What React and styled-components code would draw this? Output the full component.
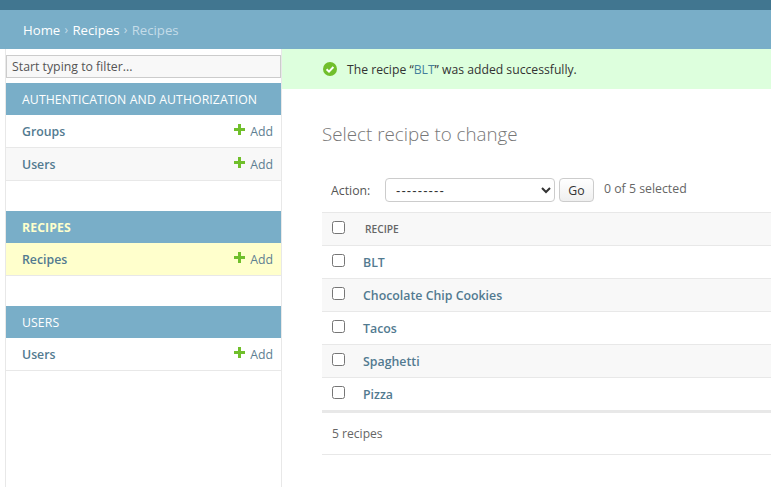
import React from 'react';
import styled, { createGlobalStyle } from 'styled-components';

const GlobalStyle = createGlobalStyle`
  html, body {
    margin: 0;
    padding: 0;
    height: 100%;
    overflow: hidden;
    background: #fff;
    font-family: "Open Sans", "Noto Sans", sans-serif;
    color: #333;
  }
  #root { height: 100%; }
`;

const Page = styled.div`
  width: 771px;
  height: 487px;
  display: flex;
  flex-direction: column;
  overflow: hidden;
`;

const TopBar = styled.div`
  height: 10px;
  background: #417690;
`;

const Breadcrumbs = styled.div`
  height: 39px;
  box-sizing: border-box;
  padding: 0 23px;
  display: flex;
  align-items: center;
  gap: 4.3px;
  background: #79aec8;
  color: #c4dce8;
  font-size: 13.2px;
`;

const Crumb = styled.span`
  color: ${(p) => (p.$current ? '#c4dce8' : '#fff')};
`;

const Sep = styled.span`
  font-size: 12px;
`;

const Body = styled.div`
  flex: 1;
  display: flex;
  min-height: 0;
`;

const Sidebar = styled.div`
  width: 277px;
  margin-left: 5px;
  box-sizing: border-box;
  border-left: 1px solid #e8e8e8;
  border-right: 1px solid #e8e8e8;
  padding-top: 6px;
  flex-shrink: 0;
`;

const Filter = styled.input`
  display: block;
  width: 275px;
  height: 23px;
  box-sizing: border-box;
  margin: 0 0 5px;
  padding: 0 5px;
  border: 1px solid #ccc;
  border-radius: 0;
  background: #f8f8f8;
  outline: none;
  font-family: inherit;
  font-size: 12.3px;
  &::placeholder { color: #555; opacity: 1; }
`;

const Section = styled.div`
  margin-bottom: 30px;
`;

const Caption = styled.div`
  height: 32px;
  box-sizing: border-box;
  padding-left: 16px;
  display: flex;
  align-items: center;
  background: #79aec8;
  color: ${(p) => (p.$active ? '#ffffcc' : '#fff')};
  font-size: 12.25px;
  font-weight: ${(p) => (p.$active ? 700 : 400)};
  letter-spacing: 0.1px;
`;

const SideRow = styled.div`
  height: 33px;
  box-sizing: border-box;
  padding: 0 8px 0 16px;
  display: flex;
  align-items: center;
  justify-content: space-between;
  border-bottom: 1px solid #e8e8e8;
  background: ${(p) => p.$bg || '#fff'};
  font-size: 12.3px;
`;

const ModelLink = styled.span`
  font-weight: 600;
  color: #527a90;
`;

const AddLink = styled.span`
  display: flex;
  align-items: center;
  gap: 5px;
  color: #5f7f92;
`;

const PlusIcon = styled.svg`
  width: 11px;
  height: 11px;
  margin-top: -4px;
  fill: #70bf2b;
`;

const Main = styled.div`
  flex: 1;
  min-width: 0;
`;

const Message = styled.div`
  height: 40px;
  box-sizing: border-box;
  padding-left: 41px;
  display: flex;
  align-items: center;
  gap: 10px;
  background: #dfd;
  font-size: 12.2px;
`;

const MessageLink = styled.span`
  color: #447e9b;
`;

const Content = styled.div`
  padding: 31px 0 0 40px;
`;

const Title = styled.h1`
  margin: 0 0 30px;
  height: 28px;
  line-height: 28px;
  font-size: 18.8px;
  font-weight: 300;
  color: #777;
`;

const Actions = styled.div`
  height: 24px;
  display: flex;
  align-items: center;
  padding-left: 9px;
  margin-bottom: 10px;
  font-size: 12.3px;
  color: #555;
`;

const ActionLabel = styled.span`
  width: 54px;
`;

const ActionSelect = styled.select`
  width: 170px;
  height: 24px;
  box-sizing: border-box;
  padding: 0 6px;
  border: 1px solid #ccc;
  border-radius: 4px;
  background: #fff;
  color: #333;
  font-family: "Liberation Sans", sans-serif;
  font-size: 13px;
  letter-spacing: 1.1px;
`;

const GoButton = styled.button`
  width: 35px;
  height: 24px;
  margin-left: 4px;
  padding: 0;
  border: 1px solid #ccc;
  border-radius: 4px;
  background: linear-gradient(#fff, #efefef);
  color: #333;
  font-family: inherit;
  font-size: 12.3px;
`;

const Counter = styled.span`
  margin-left: 10px;
  margin-top: -3px;
  color: #666;
`;

const Row = styled.div`
  height: 33px;
  box-sizing: border-box;
  display: flex;
  align-items: center;
  padding-left: 10px;
  border-bottom: 1px solid #e8e8e8;
  background: ${(p) => (p.$alt ? '#f8f8f8' : '#fff')};
`;

const HeadRow = styled(Row)`
  height: 34px;
  border-top: 1px solid #e8e8e8;
  background: #f8f8f8;
`;

const Check = styled.input.attrs({ type: 'checkbox' })`
  width: 13px;
  height: 13px;
  margin: -3px 0 0;
  flex-shrink: 0;
`;

const HeadLabel = styled.span`
  margin-left: 20px;
  font-size: 10.2px;
  font-weight: 600;
  color: #666;
`;

const RowLink = styled.span`
  margin-left: 18px;
  font-size: 12.35px;
  font-weight: 600;
  color: #527a90;
`;

const Paginator = styled.div`
  height: 44px;
  box-sizing: border-box;
  padding-left: 10px;
  display: flex;
  align-items: center;
  border-top: 2px solid #e8e8e8;
  border-bottom: 1px solid #e8e8e8;
  font-size: 12.1px;
  color: #666;
`;

const Plus = () => (
  <PlusIcon viewBox="0 0 11 11">
    <path d="M4 0h3v4h4v3H7v4H4V7H0V4h4z" />
  </PlusIcon>
);

const CheckCircle = () => (
  <svg width="14" height="14" viewBox="0 0 14 14">
    <circle cx="7" cy="7" r="7" fill="#70bf2b" />
    <path d="M3.6 7.2l2.4 2.4 4.4-4.6" fill="none" stroke="#fff" strokeWidth="2" />
  </svg>
);

const sections = [
  {
    name: 'AUTHENTICATION AND AUTHORIZATION',
    models: [{ name: 'Groups' }, { name: 'Users', bg: '#f8f8f8' }],
  },
  { name: 'RECIPES', active: true, models: [{ name: 'Recipes', bg: '#ffc' }] },
  { name: 'USERS', models: [{ name: 'Users' }] },
];

const recipes = ['BLT', 'Chocolate Chip Cookies', 'Tacos', 'Spaghetti', 'Pizza'];

export default function App() {
  return (
    <Page>
      <GlobalStyle />
      <TopBar />
      <Breadcrumbs>
        <Crumb>Home</Crumb>
        <Sep>›</Sep>
        <Crumb>Recipes</Crumb>
        <Sep>›</Sep>
        <Crumb $current>Recipes</Crumb>
      </Breadcrumbs>
      <Body>
        <Sidebar>
          <Filter placeholder="Start typing to filter..." />
          {sections.map((section) => (
            <Section key={section.name}>
              <Caption $active={section.active}>{section.name}</Caption>
              {section.models.map((model) => (
                <SideRow key={model.name} $bg={model.bg}>
                  <ModelLink>{model.name}</ModelLink>
                  <AddLink>
                    <Plus />
                    Add
                  </AddLink>
                </SideRow>
              ))}
            </Section>
          ))}
        </Sidebar>
        <Main>
          <Message>
            <CheckCircle />
            <span>
              The recipe “<MessageLink>BLT</MessageLink>” was added successfully.
            </span>
          </Message>
          <Content>
            <Title>Select recipe to change</Title>
            <Actions>
              <ActionLabel>Action:</ActionLabel>
              <ActionSelect defaultValue="">
                <option value="">---------</option>
              </ActionSelect>
              <GoButton>Go</GoButton>
              <Counter>0 of 5 selected</Counter>
            </Actions>
            <HeadRow>
              <Check />
              <HeadLabel>RECIPE</HeadLabel>
            </HeadRow>
            {recipes.map((recipe, index) => (
              <Row key={recipe} $alt={index % 2 === 1}>
                <Check />
                <RowLink>{recipe}</RowLink>
              </Row>
            ))}
            <Paginator>5 recipes</Paginator>
          </Content>
        </Main>
      </Body>
    </Page>
  );
}
